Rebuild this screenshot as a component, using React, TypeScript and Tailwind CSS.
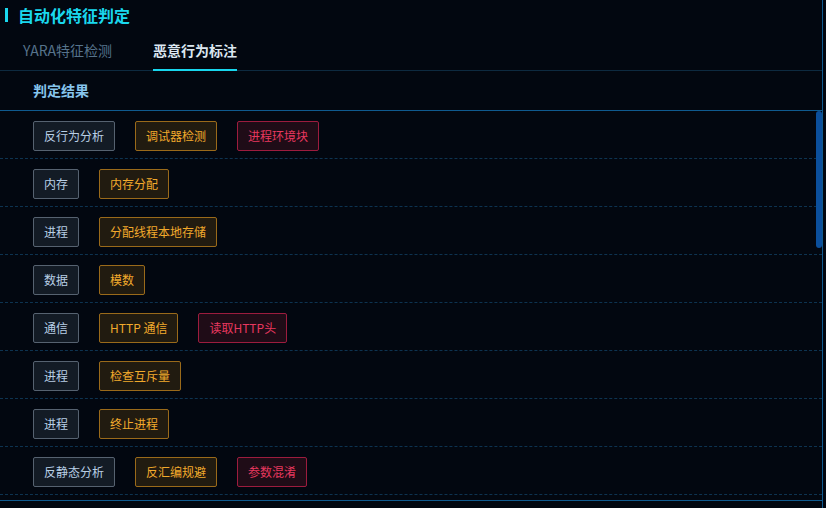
import React from 'react';

type Tone = 'gray' | 'amber' | 'red';

interface Row {
  category: string;
  tags: { label: string; tone: Tone }[];
}

const rows: Row[] = [
  { category: '反行为分析', tags: [{ label: '调试器检测', tone: 'amber' }, { label: '进程环境块', tone: 'red' }] },
  { category: '内存', tags: [{ label: '内存分配', tone: 'amber' }] },
  { category: '进程', tags: [{ label: '分配线程本地存储', tone: 'amber' }] },
  { category: '数据', tags: [{ label: '模数', tone: 'amber' }] },
  { category: '通信', tags: [{ label: 'HTTP 通信', tone: 'amber' }, { label: '读取HTTP头', tone: 'red' }] },
  { category: '进程', tags: [{ label: '检查互斥量', tone: 'amber' }] },
  { category: '进程', tags: [{ label: '终止进程', tone: 'amber' }] },
  { category: '反静态分析', tags: [{ label: '反汇编规避', tone: 'amber' }, { label: '参数混淆', tone: 'red' }] },
];

const toneClass: Record<Tone, string> = {
  gray: 'bg-[#131b25] border-[#566270] text-[#b8cfe6]',
  amber: 'bg-[#211b10] border-[#9a6a1a] text-[#f2aa2c]',
  red: 'bg-[#1f0c17] border-[#9c1c3e] text-[#e8385f]',
};

const Tag = ({ label, tone }: { label: string; tone: Tone }) => (
  <span className={`h-[30px] px-[10px] flex items-center border rounded-[2px] text-[12px] leading-none whitespace-pre ${toneClass[tone]}`}>
    {label}
  </span>
);

export default function App() {
  return (
    <div
      className="w-[826px] h-[508px] bg-[#020710] overflow-hidden"
      style={{ fontFamily: '"Noto Sans CJK SC", "Noto Sans", sans-serif' }}
    >
      <div className="w-[823px] h-full border-r border-[#0f5a8f] flex flex-col">
        {/* title */}
        <div className="h-[30px] flex items-center pl-[5px] shrink-0">
          <div className="w-[3px] h-[14px] bg-[#1ad8ee] shrink-0" />
          <h2 className="ml-[10px] text-[16px] font-bold text-[#1ad8ee] leading-none">自动化特征判定</h2>
        </div>

        {/* tabs */}
        <div className="h-[41px] flex items-end gap-[41px] pl-[23px] border-b border-[#0d2a40] shrink-0">
          <button className="h-full flex items-center pt-[1px] text-[14px] text-[#56738c]">YARA特征检测</button>
          <button className="h-full flex items-center pt-[1px] text-[14px] font-bold text-[#dbe6f0] relative">
            恶意行为标注
            <span className="absolute left-0 right-0 -bottom-px h-[2px] bg-[#18d6ee]" />
          </button>
        </div>

        {/* table header */}
        <div className="h-[40px] flex items-center pl-[33px] border-b border-[#0f5a8f] shrink-0">
          <span className="text-[14px] font-bold text-[#86c4ec]">判定结果</span>
        </div>

        {/* body */}
        <div className="relative h-[390px] border-b border-[#0f5a8f] overflow-hidden">
          {rows.map((row, i) => (
            <div
              key={i}
              className="h-[48px] flex items-start gap-[20px] pl-[33px] pt-[10px] border-b border-dashed border-[#0d3350]"
            >
              <Tag label={row.category} tone="gray" />
              {row.tags.map((t, j) => (
                <Tag key={j} label={t.label} tone={t.tone} />
              ))}
            </div>
          ))}
          {/* scrollbar thumb */}
          <div className="absolute right-0 top-0 w-[6px] h-[137px] rounded-[3px] bg-[#0b4f9c]" />
        </div>
      </div>
    </div>
  );
}
